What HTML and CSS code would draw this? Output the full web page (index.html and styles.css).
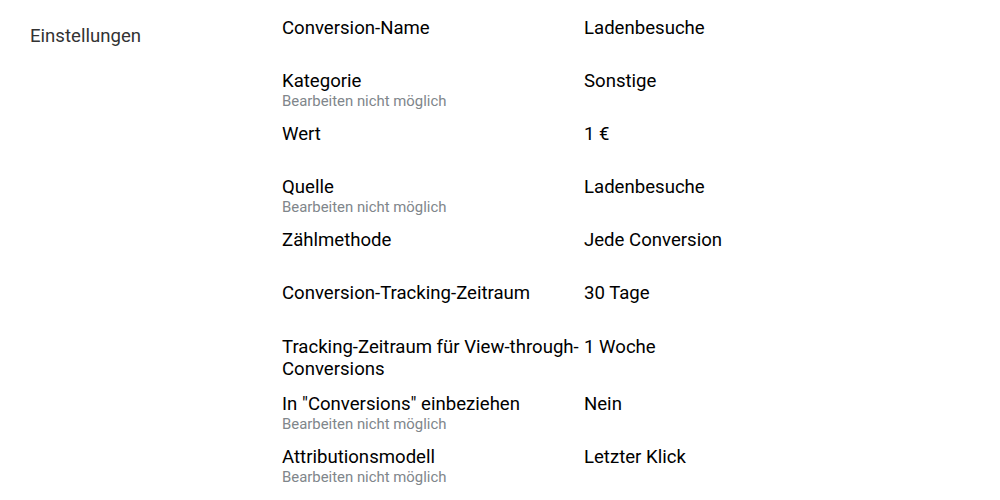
FILE: index.html
```html
<!DOCTYPE html>
<html>

<head>
    <title>Einstellungen</title>
    <meta charset="utf-8">
    <meta name="viewport" content="width=device-width, initial-scale=1.0">
    <link rel="stylesheet" href="styles.css">
</head>

<body>
    <main class="seite">
        <h2 class="titel">Einstellungen</h2>
        <section class="liste">
            <div class="zeile">
                <div class="label">Conversion-Name</div>
                <div class="wert">Ladenbesuche</div>
            </div>
            <div class="zeile">
                <div class="label">Kategorie<span class="hinweis">Bearbeiten nicht möglich</span></div>
                <div class="wert">Sonstige</div>
            </div>
            <div class="zeile">
                <div class="label">Wert</div>
                <div class="wert">1 €</div>
            </div>
            <div class="zeile">
                <div class="label">Quelle<span class="hinweis">Bearbeiten nicht möglich</span></div>
                <div class="wert">Ladenbesuche</div>
            </div>
            <div class="zeile">
                <div class="label">Zählmethode</div>
                <div class="wert">Jede Conversion</div>
            </div>
            <div class="zeile">
                <div class="label">Conversion-Tracking-Zeitraum</div>
                <div class="wert">30 Tage</div>
            </div>
            <div class="zeile">
                <div class="label">Tracking-Zeitraum für View-through-Conversions</div>
                <div class="wert">1 Woche</div>
            </div>
            <div class="zeile">
                <div class="label">In "Conversions" einbeziehen<span class="hinweis">Bearbeiten nicht möglich</span></div>
                <div class="wert">Nein</div>
            </div>
            <div class="zeile">
                <div class="label">Attributionsmodell<span class="hinweis">Bearbeiten nicht möglich</span></div>
                <div class="wert">Letzter Klick</div>
            </div>
        </section>
    </main>
</body>

</html>
```

FILE: styles.css
```css
body {
    margin: 0;
    font-family: Roboto, "Liberation Sans", sans-serif;
    color: #000;
    background: #fff;
}

.seite {
    display: flex;
}

.titel {
    width: 252px;
    margin: 0;
    padding: 25px 0 0 30px;
    font-size: 18.6px;
    font-weight: normal;
    line-height: 22px;
    color: #333;
}

.liste {
    padding-top: 17px;
}

.zeile {
    display: flex;
    min-height: 40px;
    padding-bottom: 13.1px;
    font-size: 18.6px;
    line-height: 22px;
}

.label {
    width: 302px;
}

.hinweis {
    display: block;
    font-size: 14.9px;
    line-height: 18px;
    color: #80868b;
}
```
